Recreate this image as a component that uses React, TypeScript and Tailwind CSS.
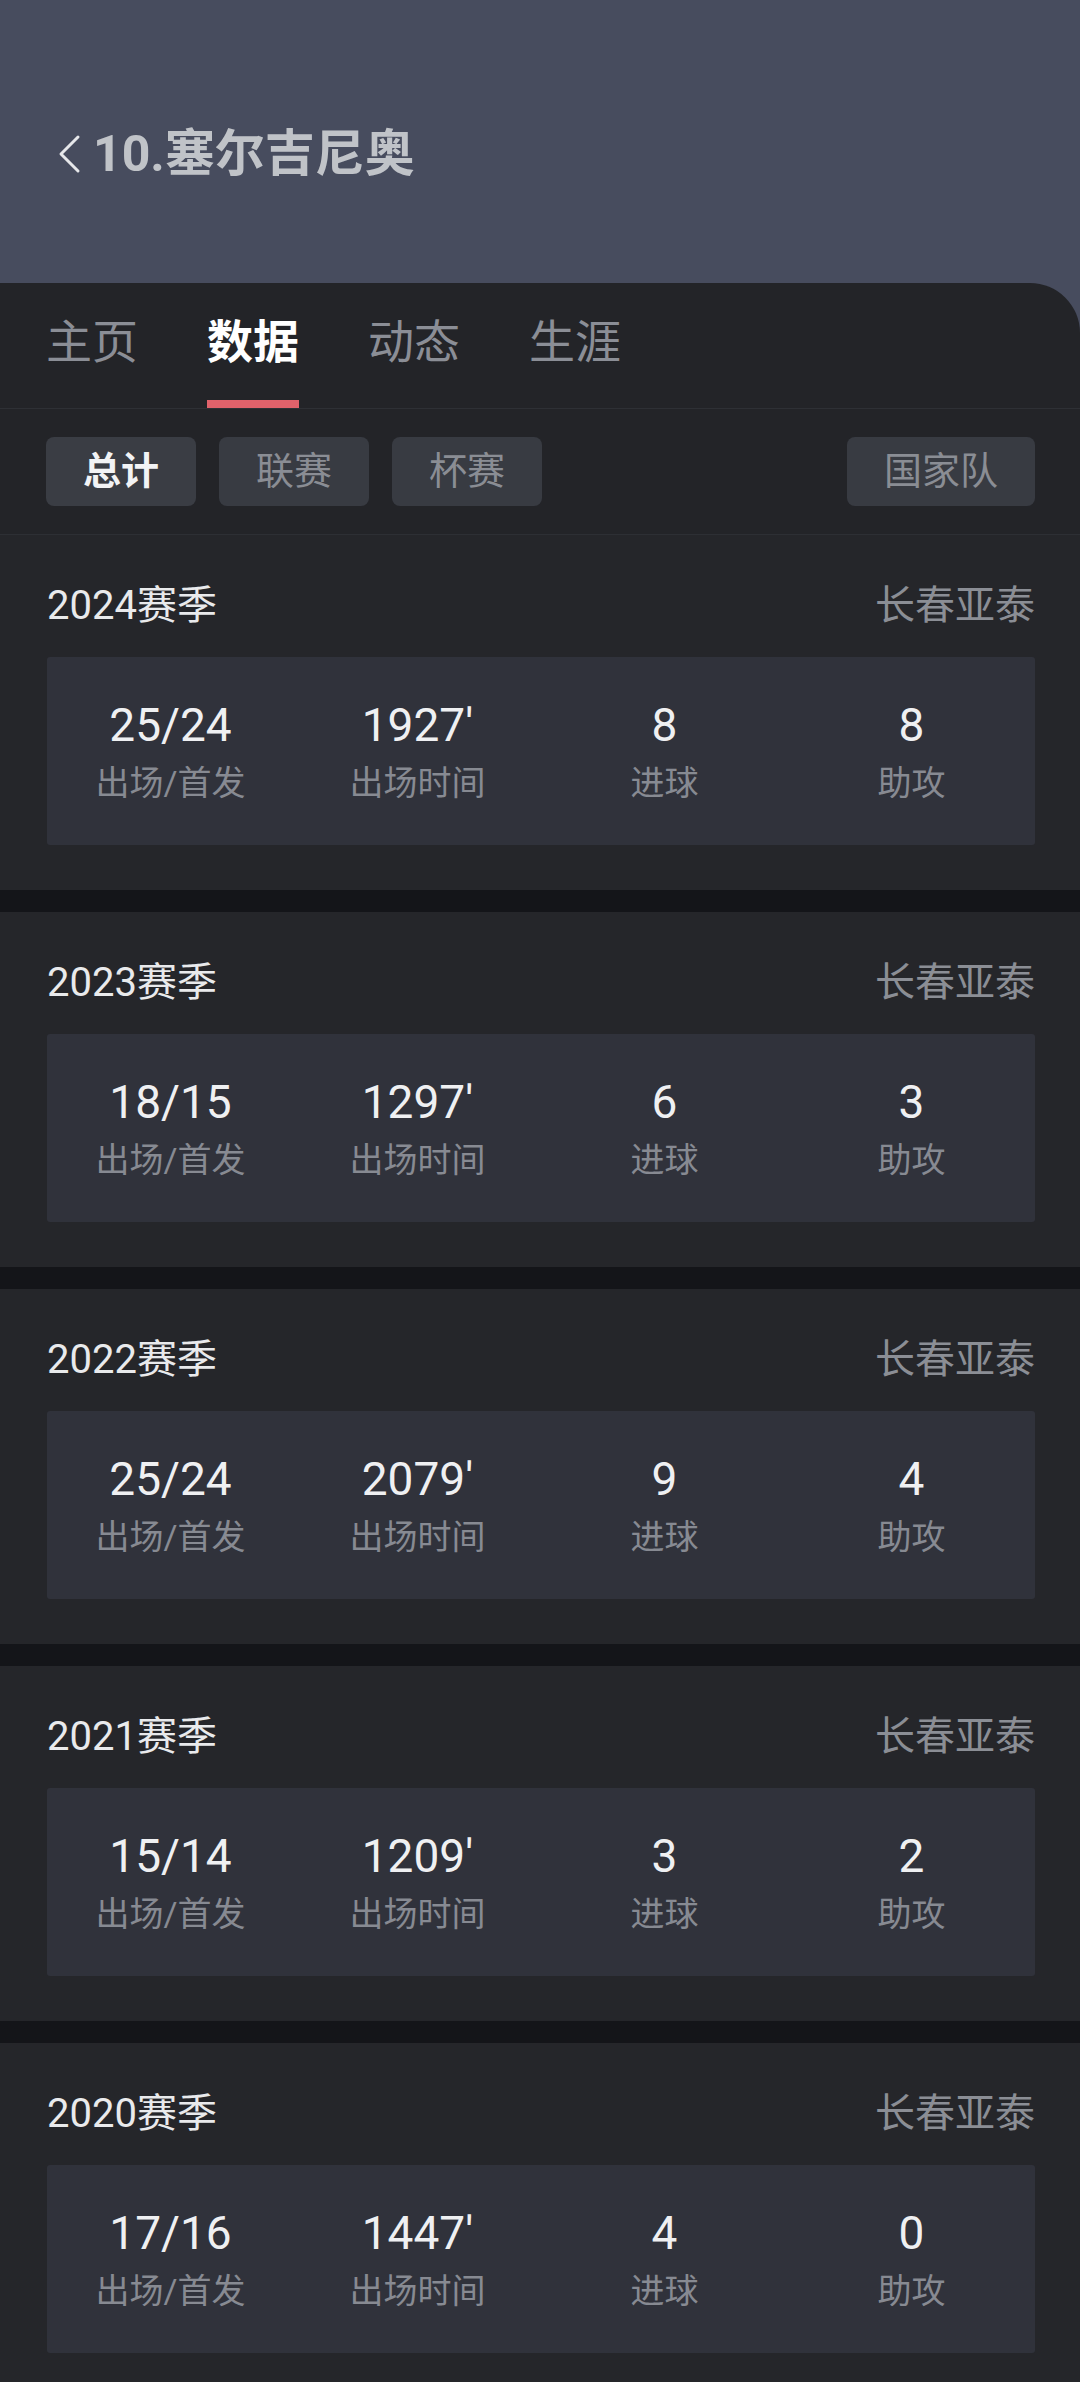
import React from "react";

type Season = {
  year: string;
  team: string;
  apps: string;
  minutes: string;
  goals: string;
  assists: string;
};

const seasons: Season[] = [
  { year: "2024", team: "长春亚泰", apps: "25/24", minutes: "1927'", goals: "8", assists: "8" },
  { year: "2023", team: "长春亚泰", apps: "18/15", minutes: "1297'", goals: "6", assists: "3" },
  { year: "2022", team: "长春亚泰", apps: "25/24", minutes: "2079'", goals: "9", assists: "4" },
  { year: "2021", team: "长春亚泰", apps: "15/14", minutes: "1209'", goals: "3", assists: "2" },
  { year: "2020", team: "长春亚泰", apps: "17/16", minutes: "1447'", goals: "4", assists: "0" },
];

const tabs = ["主页", "数据", "动态", "生涯"];

const Stat = ({ value, label }: { value: string; label: string }) => (
  <div className="flex flex-col items-center">
    <span className="text-[46px] leading-[52px] text-[#eff0f2]">{value}</span>
    <span className="mt-[12px] text-[34px] leading-[40px] text-[#878a92]">{label}</span>
  </div>
);

const SeasonBlock = ({ s }: { s: Season }) => (
  <section className="bg-[#25262a] pt-[43px] pb-[45px]">
    <div className="flex h-[56px] items-center justify-between pl-[47px] pr-[45px]">
      <span className="text-[40px] text-[#e9eaec]">{s.year}赛季</span>
      <span className="text-[40px] text-[#8b8e95]">{s.team}</span>
    </div>
    <div className="ml-[47px] mr-[45px] mt-[23px] grid h-[188px] grid-cols-4 content-center rounded-[3px] bg-[#30323b]">
      <Stat value={s.apps} label="出场/首发" />
      <Stat value={s.minutes} label="出场时间" />
      <Stat value={s.goals} label="进球" />
      <Stat value={s.assists} label="助攻" />
    </div>
  </section>
);

export default function App() {
  return (
    <div className="h-[2382px] w-[1080px] overflow-hidden bg-[#474c5e] font-['Roboto','Noto_Sans_CJK_SC',sans-serif]">
      {/* header */}
      <header className="flex h-[283px] items-start pt-[124px] pl-[57px]">
        <div className="flex items-center gap-[12px]">
          <svg width="24" height="40" viewBox="0 0 24 40" fill="none">
            <polyline points="21,3 4,20 21,37" stroke="#e6e7ea" strokeWidth="3" strokeLinecap="round" strokeLinejoin="round" />
          </svg>
          <h1 className="text-[50px] font-bold leading-[60px] text-[#c0c3c8]">10.塞尔吉尼奥</h1>
        </div>
      </header>

      <main className="rounded-tr-[50px] bg-[#232428]">
        {/* tabs */}
        <nav className="flex gap-[69px] border-b border-[#2e3035] pl-[46px]">
          {tabs.map((t, i) => (
            <div key={t} className="flex flex-col pt-[29px]">
              <span
                className={
                  i === 1
                    ? "text-[46px] font-bold leading-[60px] text-white"
                    : "text-[46px] leading-[60px] text-[#8b8e96]"
                }
              >
                {t}
              </span>
              <div className={i === 1 ? "mt-[28px] h-[8px] bg-[#e0626b]" : "mt-[28px] h-[8px]"} />
            </div>
          ))}
        </nav>

        {/* filters */}
        <div className="flex items-center border-b border-[#2d2f34] pl-[46px] pr-[45px] py-[28px]">
          <div className="flex gap-[23px]">
            <button className="h-[69px] rounded-[8px] bg-[#3a3d44] px-[37px] text-[38px] font-bold text-[#f2f3f5]">总计</button>
            <button className="h-[69px] rounded-[8px] bg-[#383b42] px-[37px] text-[38px] text-[#8a8d94]">联赛</button>
            <button className="h-[69px] rounded-[8px] bg-[#383b42] px-[37px] text-[38px] text-[#8a8d94]">杯赛</button>
          </div>
          <button className="ml-auto h-[69px] rounded-[8px] bg-[#383b42] px-[37px] text-[38px] text-[#8a8d94]">国家队</button>
        </div>

        <div className="flex flex-col gap-[22px] bg-[#141519]">
          {seasons.map((s) => (
            <SeasonBlock key={s.year} s={s} />
          ))}
        </div>
      </main>
    </div>
  );
}
